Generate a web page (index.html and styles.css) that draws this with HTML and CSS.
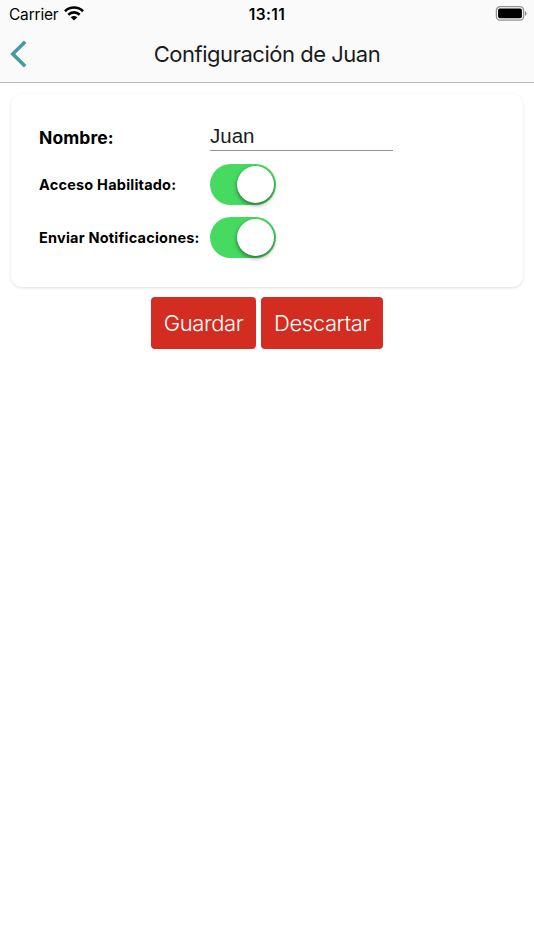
FILE: index.html
```html
<!DOCTYPE html>
<html lang="es">
<head>
<meta charset="utf-8">
<title>Configuración de Juan</title>
<link rel="stylesheet" href="styles.css">
</head>
<body>
<header class="header">
  <div class="status">
    <div class="carrier"><span>Carrier</span>
      <svg class="wifi" width="20" height="15" viewBox="0 0 20 15"><path fill="none" stroke="#000" stroke-width="2.6" d="M1 5.2C6 .3 14 .3 19 5.2M4.3 8.7c3.2-3.1 8.2-3.1 11.4 0"/><path d="M6.7 11.2c1.9-1.7 4.7-1.7 6.6 0L10 14.5z"/></svg>
    </div>
    <time class="clock">13:11</time>
    <svg class="battery" width="32" height="16" viewBox="0 0 32 16"><rect x="1.4" y=".7" width="27.2" height="13.4" rx="3.6" fill="none" stroke="#929292" stroke-width="1.3"/><rect x="3.1" y="2.5" width="23.8" height="9.8" rx="1.7"/><path d="M29.9 5q1.7.6 1.7 2.4t-1.7 2.4z" fill="#929292"/></svg>
  </div>
  <div class="navbar">
    <svg class="back" width="18" height="28" viewBox="0 0 18 28"><path d="M15.2 1.7 2.8 14l12.4 12.3" fill="none" stroke="#4899a4" stroke-width="3.6"/></svg>
    <h1 class="title">Configuración de Juan</h1>
    <span></span>
  </div>
</header>
<main>
  <form class="card">
    <label class="label label-name" for="name">Nombre:</label>
    <input class="name" id="name" type="text" value="Juan">
    <span class="label">Acceso Habilitado:</span>
    <span class="toggle"></span>
    <span class="label">Enviar Notificaciones:</span>
    <span class="toggle"></span>
  </form>
  <div class="actions">
    <button class="button save" type="button">Guardar</button>
    <button class="button discard" type="button">Descartar</button>
  </div>
</main>
</body>
</html>
```
FILE: styles.css
```css
* { box-sizing: border-box; }
body { margin: 0; min-height: 950px; background: #fff; color: #000; font-family: Inter, "Liberation Sans", sans-serif; }
.header { height: 83px; background: #fafafa; border-bottom: 1px solid #b8b8b8; }
.status { display: grid; grid-template-columns: 1fr auto 1fr; align-items: center; height: 28px; padding: 0 7px 0 9px; }
.carrier { display: flex; align-items: center; gap: 6px; padding-top: 1px; font-size: 15.5px; line-height: 28px; letter-spacing: -.2px; }
.wifi { margin-top: -3px; }
.clock { padding-top: 1px; margin-left: -2px; font-size: 15.5px; font-weight: 600; line-height: 28px; letter-spacing: .45px; }
.battery { justify-self: end; margin-top: -2px; }
.navbar { display: grid; grid-template-columns: 1fr auto 1fr; align-items: center; height: 52px; padding: 0 10px; }
.title { margin: 0; color: #1b1b1b; font-size: 22px; font-weight: 400; line-height: 30px; letter-spacing: -.48px; }
.card { display: grid; grid-template-columns: 171px 183px; grid-template-rows: 37px 41px 41px; row-gap: 12px; align-items: center; align-content: start; height: 193px; margin: 11px 11px 0; padding: 21px 28px 0; border-radius: 11px; box-shadow: 0 1px 3px rgba(0, 0, 0, .13); }
.label { font-size: 14.5px; font-weight: 650; line-height: 20px; letter-spacing: .21px; white-space: nowrap; }
.label-name { margin-top: 8px; font-size: 17.5px; letter-spacing: .1px; }
.name { align-self: start; width: 183px; height: 36px; margin: 0; padding: 7px 0 0; border: 0; border-bottom: 1px solid #969696; border-radius: 0; outline: 0; background: transparent; color: #1b1b1b; font: 20.5px "Liberation Sans", sans-serif; }
.toggle { display: flex; justify-content: flex-end; width: 66px; height: 41px; padding: 2px; border-radius: 21px; background: #46db60; }
.toggle::before { content: ""; width: 37px; height: 37px; border-radius: 50%; background: #fff; box-shadow: 0 2px 4px rgba(0, 0, 0, .5); }
.actions { display: flex; justify-content: center; gap: 5px; margin-top: 10px; }
.button { height: 52px; padding: 0; border: 0; border-radius: 4px; background: #d22d20; color: #fff; font: 350 22px/51px Inter, "Liberation Sans", sans-serif; letter-spacing: -.38px; white-space: nowrap; }
.save { width: 105px; }
.discard { width: 122px; }
```
